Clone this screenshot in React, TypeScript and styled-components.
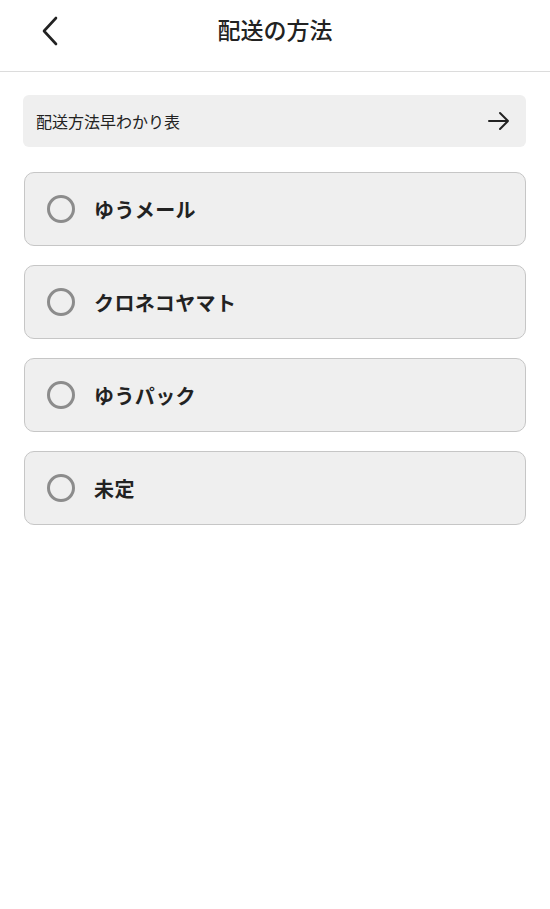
import React from 'react';
import styled, { createGlobalStyle } from 'styled-components';

const GlobalStyle = createGlobalStyle`
  html, body {
    margin: 0;
    padding: 0;
    background: #ffffff;
  }
  body {
    font-family: 'Noto Sans CJK JP', 'Noto Sans', sans-serif;
    color: #222222;
  }
`;

const Page = styled.div`
  width: 550px;
  min-height: 909px;
  background: #ffffff;
`;

const Header = styled.header`
  height: 71px;
  border-bottom: 1px solid #dcdcdc;
  display: grid;
  grid-template-columns: 80px 1fr 80px;
  align-items: center;
`;

const BackButton = styled.button`
  border: none;
  background: none;
  padding: 0 0 10px 40px;
  height: 100%;
  display: flex;
  align-items: center;
  cursor: pointer;
`;

const Title = styled.h1`
  margin: 0;
  text-align: center;
  font-size: 23px;
  font-weight: 500;
  color: #222222;
  padding-bottom: 14px;
`;

const Content = styled.main`
  padding: 23px 24px 0 23px;
  display: flex;
  flex-direction: column;
  gap: 25px;
`;

const GuideLink = styled.a`
  height: 52px;
  background: #efefef;
  border-radius: 6px;
  display: flex;
  align-items: center;
  justify-content: space-between;
  padding: 0 15px 0 13px;
  font-size: 16px;
  color: #222222;
  text-decoration: none;
`;

const OptionList = styled.div`
  display: flex;
  flex-direction: column;
  gap: 19px;
  padding-left: 1px;
`;

const Option = styled.label`
  height: 72px;
  border: 1px solid #c6c6c6;
  border-radius: 10px;
  background: #efefef;
  display: flex;
  align-items: center;
  gap: 19px;
  padding-left: 22px;
  cursor: pointer;
`;

const Radio = styled.span`
  width: 22px;
  height: 22px;
  border: 3.5px solid #8c8c8c;
  border-radius: 50%;
  box-sizing: content-box;
  flex-shrink: 0;
`;

const OptionLabel = styled.span`
  font-size: 20px;
  font-weight: 700;
  letter-spacing: 0.4px;
  color: #222222;
`;

const options = ['ゆうメール', 'クロネコヤマト', 'ゆうパック', '未定'];

export default function App() {
  return (
    <Page>
      <GlobalStyle />
      <Header>
        <BackButton aria-label="戻る">
          <svg width="20" height="32" viewBox="0 0 20 32" fill="none">
            <path d="M16 3 L4 16 L16 29" stroke="#222" strokeWidth="2.6" strokeLinecap="round" strokeLinejoin="round" />
          </svg>
        </BackButton>
        <Title>配送の方法</Title>
        <span />
      </Header>
      <Content>
        <GuideLink href="#">
          <span>配送方法早わかり表</span>
          <svg width="24" height="24" viewBox="0 0 24 24" fill="none">
            <path d="M2 12 H21 M13 4 L21 12 L13 20" stroke="#222" strokeWidth="2" strokeLinecap="round" strokeLinejoin="round" />
          </svg>
        </GuideLink>
        <OptionList>
          {options.map((o) => (
            <Option key={o}>
              <Radio />
              <OptionLabel>{o}</OptionLabel>
            </Option>
          ))}
        </OptionList>
      </Content>
    </Page>
  );
}
